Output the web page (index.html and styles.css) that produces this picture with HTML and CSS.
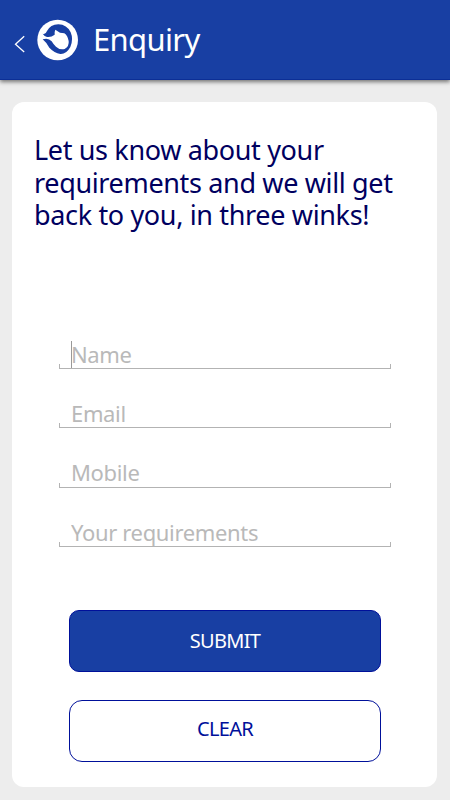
FILE: index.html
```html
<!DOCTYPE html>
<html lang="en">
<head>
    <meta charset="UTF-8">
    <meta name="viewport" content="width=device-width, initial-scale=1.0">
    <title>Enquiry</title>
    <link rel="stylesheet" href="styles.css">
</head>
<body>
    <header class="header">
        <a class="back" href="#" aria-label="Back">
            <svg width="12" height="18" viewBox="0 0 12 18">
                <path d="M10.2 1.2 L1.5 9.2 L10.2 17" fill="none" stroke="#fff" stroke-width="1.3"/>
            </svg>
        </a>
        <svg class="logo" width="42" height="42" viewBox="20 21 126 126">
            <circle cx="82" cy="84" r="61" fill="#fff"/>
            <path fill="#183fa3" d="M37 65 Q45 69 50 57 Q60 38 84 37 Q110 38 121 61 Q130 82 120 105 Q108 127 90 126 Q72 123 57 107 Q49 92 37 82 Q54 76 64 88 Q69 97 77 104 Q89 115 103 111 Q117 103 115 87 Q112 71 102 64 L89 62 L75 53 Q72 59 73 68 Q62 77 50 75 Q42 73 37 65 Z"/>
        </svg>
        <h1 class="title">Enquiry</h1>
    </header>

    <main class="card">
        <p class="intro">Let us know about your<br>requirements and we will get<br>back to you, in three winks!</p>
        <form class="form">
            <div class="field">
                <input class="name" type="text" placeholder="Name">
                <span class="caret"></span>
            </div>
            <div class="field">
                <input class="email" type="text" placeholder="Email">
            </div>
            <div class="field">
                <input class="mobile" type="text" placeholder="Mobile">
            </div>
            <div class="field">
                <input class="requirements" type="text" placeholder="Your requirements">
            </div>
            <button class="button submit" type="button">SUBMIT</button>
            <button class="button clear" type="reset">CLEAR</button>
        </form>
    </main>
</body>
</html>
```
FILE: styles.css
```css
* {
    box-sizing: border-box;
}
body {
    margin: 0;
    height: 800px;
    overflow: hidden;
    background-color: #ededed;
    font-family: "Noto Sans", "Open Sans", sans-serif;
}
.header {
    display: flex;
    align-items: center;
    height: 80px;
    padding-left: 14px;
    background-color: #183fa3;
    border-bottom: 1px solid #0c2f96;
    box-shadow: 0 2px 4px rgba(0, 0, 0, 0.5);
}
.back {
    display: flex;
    margin-top: 8px;
}
.logo {
    margin: 1px 0 0 11px;
}
.title {
    margin: -2px 0 0 14px;
    color: #fff;
    font-size: 31px;
    font-weight: 400;
    line-height: 42px;
    letter-spacing: -0.65px;
}
.card {
    width: 425px;
    height: 685px;
    margin: 22px 0 0 12px;
    padding: 32px 22px 0;
    background-color: #fff;
    border-radius: 12px;
}
.intro {
    margin: 0;
    height: 200px;
    color: #00005f;
    font-size: 27px;
    line-height: 32.5px;
    letter-spacing: -0.35px;
    white-space: nowrap;
}
.form {
    display: flex;
    flex-direction: column;
    padding: 0 24px;
}
/* underline with a short tick at both ends */
.field {
    position: relative;
    height: 35px;
    margin-bottom: 24.4px;
    border-bottom: 1px solid #b3b3b3;
    background:
        linear-gradient(#b3b3b3, #b3b3b3) left bottom / 1px 4px no-repeat,
        linear-gradient(#b3b3b3, #b3b3b3) right bottom / 1px 4px no-repeat;
    margin-left: 1px;
    margin-right: 0;
}
.field input {
    display: block;
    width: 100%;
    height: 34px;
    padding: 5px 0 0 12px;
    border: 0;
    outline: 0;
    background: none;
    font-family: inherit;
    font-size: 22px;
    letter-spacing: -0.35px;
}
.field input::placeholder {
    color: #b9b9b9;
    opacity: 1;
}
.caret {
    position: absolute;
    left: 12px;
    top: 7px;
    width: 1px;
    height: 27px;
    background-color: #999;
}
.button {
    width: 312px;
    height: 62px;
    margin: 0 0 28px 11px;
    padding: 0;
    border: 1px solid #00109a;
    border-radius: 13px;
    font-family: inherit;
    font-size: 20px;
    letter-spacing: -0.7px;
}
.submit {
    margin-top: 38px;
    border-radius: 10px;
    background-color: #183fa3;
    color: #fff;
}
.clear {
    padding-bottom: 4px;
    background-color: #fff;
    color: #00109a;
}
```
